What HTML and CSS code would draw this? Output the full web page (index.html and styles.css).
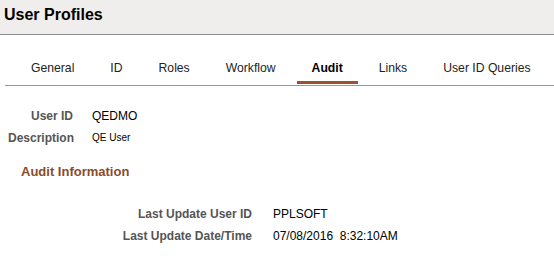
FILE: index.html
```html
<!DOCTYPE html>
<html>

<head>
    <title>User Profiles</title>
    <link rel="stylesheet" href="styles.css">
</head>

<body>

    <header class="page-title">
        <h1>User Profiles</h1>
    </header>

    <nav class="tabs">
        <ul>
            <li><a href="#">General</a></li>
            <li><a href="#">ID</a></li>
            <li><a href="#">Roles</a></li>
            <li><a href="#">Workflow</a></li>
            <li class="active"><a href="#">Audit</a></li>
            <li><a href="#">Links</a></li>
            <li><a href="#">User ID Queries</a></li>
        </ul>
    </nav>

    <section class="user-info">
        <span class="label">User ID</span>
        <span class="value">QEDMO</span>
        <span class="label">Description</span>
        <span class="value small">QE User</span>
    </section>

    <h2 class="group-title">Audit Information</h2>

    <section class="audit-info">
        <span class="label">Last Update User ID</span>
        <span class="value">PPLSOFT</span>
        <span class="label">Last Update Date/Time</span>
        <span class="value">07/08/2016&nbsp;&nbsp;8:32:10AM</span>
    </section>

</body>

</html>
```

FILE: styles.css
```css
* {
    box-sizing: border-box;
}

body {
    margin: 0;
    background-color: #fff;
    font-family: "Liberation Sans", Arial, sans-serif;
    color: #000;
}

.page-title {
    height: 35px;
    background-color: #efeeec;
    border-bottom: 1px solid #8c8c8c;
    padding: 5px 0 0 4px;
}

.page-title h1 {
    margin: 0;
    font-size: 16px;
    line-height: 20px;
    font-weight: bold;
}

.tabs {
    padding-top: 25px;
}

.tabs ul {
    list-style-type: none;
    display: flex;
    margin: 0 0 0 5px;
    padding: 0 0 0 8px;
    border-bottom: 1px solid #999;
}

.tabs li {
    margin: 0 3px 1px;
}

.tabs a {
    display: block;
    padding: 0 15px 5px;
    font-size: 12.2px;
    line-height: 16px;
    color: #222;
    text-decoration: none;
    border-bottom: 3px solid transparent;
}

.tabs li.active a {
    font-weight: bold;
    color: #000;
    border-bottom-color: #9a5230;
}

.user-info {
    display: grid;
    grid-template-columns: 65px auto;
    column-gap: 19px;
    align-items: start;
    justify-content: start;
    margin: 19px 0 0 8px;
}

.label {
    font-size: 12px;
    line-height: 22px;
    font-weight: bold;
    color: #555;
    text-align: right;
    white-space: nowrap;
}

.value {
    font-size: 12px;
    line-height: 22px;
    color: #000;
    white-space: nowrap;
}

.value.small {
    font-size: 10px;
}

.group-title {
    margin: 13px 0 0 21px;
    font-size: 13px;
    line-height: 20px;
    font-weight: bold;
    color: #8a4b2c;
}

.audit-info {
    display: grid;
    grid-template-columns: 130px auto;
    column-gap: 21px;
    justify-content: start;
    margin: 21px 0 0 122px;
}
```
